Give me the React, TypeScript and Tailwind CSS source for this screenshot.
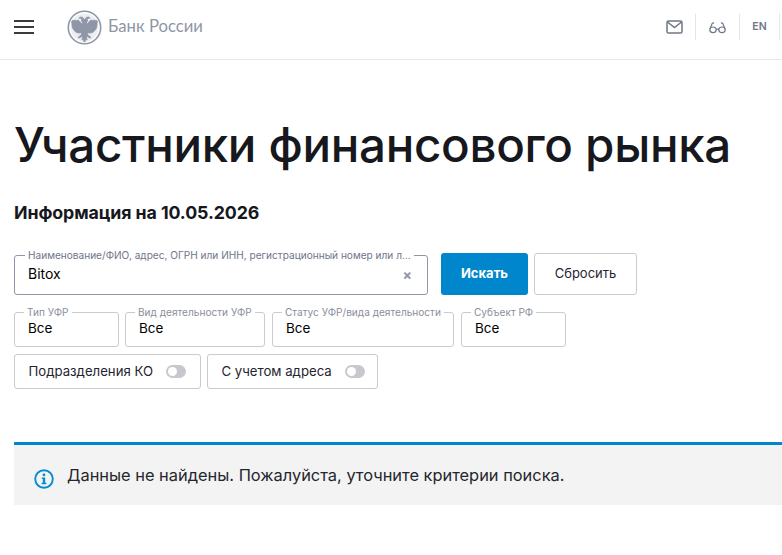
import React from "react";

const font = "font-['Inter','Noto_Sans',sans-serif]";

const eagleHalf =
   "M17.5 10.5l.4-1.6 1.3-1.6 1.6-.2 1.2 1-1.5.2-.7 1 .1 1.8-.9 1.7.8 1 2.2-3.2 1.4-.5.5.7 1.2-.9.9.8 1.3-.4.5 1-.2 2.2-.2 2.6-.5 2.4-1 1.6-1 1.6-1.6 1-1.5.3-1.4-.2-.7 1 .7 1.5 1.6 1.2.6 1.5-1.4-.4-1.7-1.1-.9 0 .7 1.8.3 1.7-1.4-.9-.4 1.6-.8 1.3z";

function Logo() {
   return (
      <svg width="35" height="35" viewBox="0 0 35 35" className="shrink-0">
         <circle cx="17.5" cy="17.5" r="16.2" fill="#fff" stroke="#8f96a6" strokeWidth="1.6" />
         <circle cx="17.5" cy="17.5" r="14" fill="#eceef1" />
         <path d={eagleHalf} fill="#8f96a6" stroke="#8f96a6" strokeWidth="0.7" transform="matrix(1.25 0 0 1 -4.375 0)" />
         <path d={eagleHalf} fill="#8f96a6" stroke="#8f96a6" strokeWidth="0.7" transform="matrix(-1.25 0 0 1 39.375 0)" />
      </svg>
   );
}

function Mail() {
   return (
      <svg width="17" height="14" viewBox="0 0 17 14" fill="none" stroke="#6f7687" strokeWidth="1.5">
         <rect x="1" y="1" width="15" height="12" rx="1.6" />
         <path d="M1.5 2l7 5.5 7-5.5" />
      </svg>
   );
}

function Glasses() {
   return (
      <svg width="17" height="13" viewBox="0 0 17 13" fill="none" stroke="#6f7687" strokeWidth="1.2">
         <ellipse cx="4" cy="8.8" rx="3.2" ry="2.8" />
         <ellipse cx="13" cy="8.8" rx="3.2" ry="2.8" />
         <path d="M7.2 8.5c.8-.6 1.8-.6 2.6 0M1 8L3.2 2.4 5 1.6M16 8L13.8 2.4 12 1.6" />
      </svg>
   );
}

function Info() {
   return (
      <svg width="20" height="20" viewBox="0 0 20 20" fill="none" className="mt-[8px] shrink-0">
         <circle cx="10" cy="10" r="8.8" stroke="#0a8bcf" strokeWidth="1.9" />
         <circle cx="10" cy="5.9" r="1.4" fill="#0a8bcf" />
         <path d="M7.8 8.6h3.4v5.2h1.2v1.4H7.6v-1.4h1.2v-3.8h-1z" fill="#0a8bcf" />
      </svg>
   );
}

function Toggle() {
   return (
      <span className="flex h-[13px] w-[20px] items-center rounded-full bg-[#c6c8cd] pl-[2px]">
         <span className="h-[9px] w-[9px] rounded-full bg-white" />
      </span>
   );
}

function Select({ label, width }: { label: string; width: string }) {
   return (
      <fieldset className={`h-[40px] min-w-0 rounded-[3px] border border-[#c9cbd0] pl-[9px] pr-2 ${width}`}>
         <legend className="px-[3px] text-[10.1px] leading-[11px] whitespace-nowrap text-[#8a8f9b]">{label}</legend>
         <div className="pl-[4px] text-[13.5px] leading-[20px] text-black">Все</div>
      </fieldset>
   );
}

function Switch({ label, width }: { label: string; width: string }) {
   return (
      <div className={`flex h-[35px] items-center gap-[13px] rounded-[3px] border border-[#c9cbd0] pl-[13.5px] text-[13.2px] text-[#1f2430] ${width}`}>
         {label}
         <Toggle />
      </div>
   );
}

export default function App() {
   return (
      <div className={`${font} h-[555px] w-[782px] overflow-hidden bg-white`}>
         <header className="flex h-[60px] items-center border-b border-[#e8e8e8] pb-[5px] pl-[14px]">
            <div className="flex w-[20px] flex-col gap-[4px]">
               <span className="h-[2px] bg-[#3b3b3b]" />
               <span className="h-[2px] bg-[#3b3b3b]" />
               <span className="h-[2px] bg-[#3b3b3b]" />
            </div>
            <div className="ml-[33px] flex items-center gap-[6px]">
               <Logo />
               <span className="font-['Lato',sans-serif] text-[16.7px] text-[#8f96a6]">Банк России</span>
            </div>
            <div className="ml-auto flex h-[26px] items-center">
               <div className="flex h-full w-[56px] items-center border-r border-[#e6e6e6] pl-[26px]">
                  <Mail />
               </div>
               <div className="flex h-full w-[44px] items-center justify-center border-r border-[#e6e6e6]">
                  <Glasses />
               </div>
               <div className="flex h-full w-[40px] items-center justify-center border-r border-[#e6e6e6] text-[10.5px] font-semibold text-[#6f7687]">
                  EN
               </div>
               <div className="w-[2px]" />
            </div>
         </header>

         <main className="pl-[14px]">
            <h1 className="mt-[55px] text-[47.5px] leading-[60px] font-medium tracking-[-0.3px] whitespace-nowrap text-[#16181d]">
               Участники финансового рынка
            </h1>
            <h2 className="mt-[26px] text-[17.8px] leading-[24px] font-bold tracking-[-0.1px] text-[#16181d]">Информация на 10.05.2026</h2>

            <div className="mt-[25px] flex items-end">
               <fieldset className="h-[45px] w-[414px] min-w-0 rounded-[3px] border border-[#8f96a6] pl-[10px] pr-[15px]">
                  <legend className="px-[3px] text-[10.1px] leading-[11px] whitespace-nowrap text-[#6f7687]">
                     Наименование/ФИО, адрес, ОГРН или ИНН, регистрационный номер или л...
                  </legend>
                  <div className="flex items-center justify-between pl-[3px] pt-[1px]">
                     <span className="text-[14px] leading-[24px] text-black">Bitox</span>
                     <span className="text-[14px] font-bold text-[#8f96a6]">×</span>
                  </div>
               </fieldset>
               <button className="ml-[13px] h-[42px] w-[87px] rounded-[3px] bg-[#0086cc] text-[13px] font-bold text-white">Искать</button>
               <button className="ml-[6px] h-[42px] w-[103px] rounded-[3px] border border-[#c9cbd0] text-[13px] text-[#1f2430]">Сбросить</button>
            </div>

            <div className="mt-[12px] flex items-end gap-[6px]">
               <Select label="Тип УФР" width="w-[105px]" />
               <Select label="Вид деятельности УФР" width="w-[140px] mr-[1px]" />
               <Select label="Статус УФР/вида деятельности" width="w-[182px] mr-[1px]" />
               <Select label="Субъект РФ" width="w-[105px]" />
            </div>

            <div className="mt-[7px] flex gap-[6px]">
               <Switch label="Подразделения КО" width="w-[187px]" />
               <Switch label="С учетом адреса" width="w-[171px]" />
            </div>

            <div className="mt-[53px] flex h-[63px] items-center gap-[13px] border-t-[3px] border-[#0086cc] bg-[#f3f3f3] pl-[20px]">
               <Info />
               <span className="text-[16.4px] text-[#23262d]">Данные не найдены. Пожалуйста, уточните критерии поиска.</span>
            </div>
         </main>
      </div>
   );
}
